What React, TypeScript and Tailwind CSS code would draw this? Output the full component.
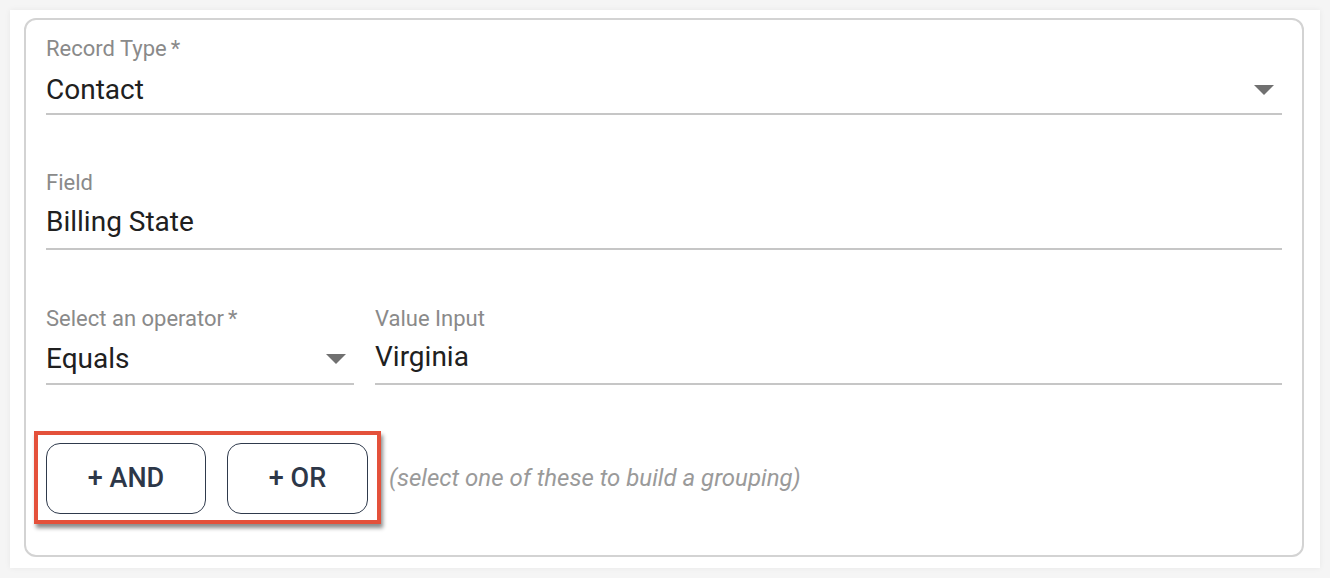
import type { ReactNode } from "react";

function Caret({ className = "" }: { className?: string }) {
  return (
    <svg width="20" height="10" viewBox="0 0 20 10" className={className} aria-hidden>
      <path d="M0 0 L20 0 L10 10 Z" fill="#707070" />
    </svg>
  );
}

function TextField({
  label,
  value,
  required,
  select,
  className = "",
  labelGap = "mt-[10px]",
  bottom = "pb-[11px]",
}: {
  label: string;
  value: ReactNode;
  required?: boolean;
  select?: boolean;
  className?: string;
  labelGap?: string;
  bottom?: string;
}) {
  return (
    <div className={`flex flex-col border-b-2 border-[#c6c6c6] ${bottom} ${className}`}>
      <div className="h-[26px] text-[22px] leading-[26px] text-[#8a8a8a]">
        {label}
        {required && <span className="ml-[4px]">*</span>}
      </div>
      <div className={`${labelGap} flex h-[32px] items-center justify-between`}>
        <span className="text-[28px] leading-[32px] text-[#202020]">{value}</span>
        {select && <Caret className="mr-[8px] shrink-0" />}
      </div>
    </div>
  );
}

export default function App() {
  return (
    <div
      className="flex h-[578px] w-[1330px] bg-[#f5f5f5] p-[10px]"
      style={{ fontFamily: "Roboto, 'Liberation Sans', sans-serif" }}
    >
      <div className="flex flex-1 bg-white pb-[11px] pl-[14px] pr-[16px] pt-[8px] shadow-[0_0_6px_rgba(0,0,0,0.06)]">
        <div className="flex flex-1 flex-col rounded-[12px] border-2 border-[#d3d3d3] px-[20px] pt-[16px]">
          <TextField
            label="Record Type"
            required
            value="Contact"
            select
            labelGap="mt-[12px]"
            bottom="pb-[7px]"
          />

          <TextField label="Field" value="Billing State" className="mt-[55px]" bottom="pb-[10px]" />

          <div className="mt-[56px] flex gap-[21px]">
            <TextField
              label="Select an operator"
              required
              value="Equals"
              select
              className="w-[308px] shrink-0"
              labelGap="mt-[11px]"
              bottom="pb-[8px]"
            />
            <TextField
              label="Value Input"
              value="Virginia"
              className="flex-1"
              labelGap="mt-[9px]"
              bottom="pb-[10px]"
            />
          </div>

          <div className="ml-[-12px] mt-[46px] flex items-center">
            <div className="flex gap-[21px] border-[4px] border-[#e4513b] pb-[6px] pl-[8px] pr-[9px] pt-[8px] shadow-[2px_4px_4px_rgba(0,0,0,0.45)]">
              <button
                type="button"
                className="flex h-[71px] w-[160px] items-center justify-center rounded-[14px] border border-[#2f3a4c] text-[27px] font-medium text-[#2d3748]"
              >
                + AND
              </button>
              <button
                type="button"
                className="flex h-[71px] w-[141px] items-center justify-center rounded-[14px] border border-[#2f3a4c] text-[27px] font-medium text-[#2d3748]"
              >
                + OR
              </button>
            </div>
            <span className="ml-[8px] text-[24px] italic text-[#9a9a9a]">
              (select one of these to build a grouping)
            </span>
          </div>
        </div>
      </div>
    </div>
  );
}
